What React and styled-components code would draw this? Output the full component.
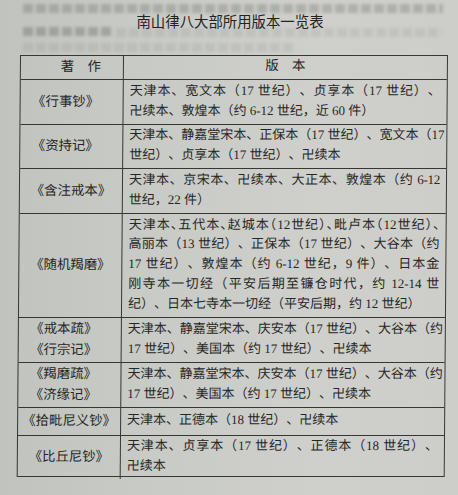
import React from "react";
import styled, { createGlobalStyle } from "styled-components";

const GlobalStyle = createGlobalStyle`
  html, body { margin: 0; padding: 0; background: #c9cbc6; }
  body {
    width: 458px;
    height: 495px;
    overflow: hidden;
    font-family: "Liberation Serif", "Noto Sans CJK SC", serif;
    color: #262626;
    text-spacing-trim: space-all;
  }
`;

const Page = styled.div`
  position: relative;
  width: 458px;
  height: 495px;
  overflow: hidden;
  box-sizing: border-box;
  padding-top: 12px;
  background-color: #cbccc7;
  background-image: linear-gradient(90deg, #c1c3be 0%, #c8cac5 30%, #cfd0cb 70%, #cdcec9 100%);
`;

/* faint bleed-through of the reverse page: blurred blocks, no text */
const Ghost = styled.div`
  position: absolute;
  left: ${(p) => p.$x}px;
  top: ${(p) => p.$y}px;
  width: ${(p) => p.$w}px;
  height: 9px;
  background: repeating-linear-gradient(
    to right,
    rgba(45, 50, 50, ${(p) => p.$a}) 0 10px,
    rgba(45, 50, 50, 0) 10px 13px
  );
  filter: blur(1.6px);
  pointer-events: none;
`;

const Sheet = styled.div`
  position: relative;
`;

const Title = styled.h1`
  margin: 0 0 23px;
  padding-left: 2px;
  font-family: "Liberation Serif", "Noto Sans CJK SC", serif;
  font-weight: 400;
  font-size: 14.4px;
  line-height: 20px;
  text-align: center;
  color: #232323;
`;

const Table = styled.div`
  margin-left: 20px;
  width: 428px;
  box-sizing: border-box;
  border: 1px solid #363636;
  transform: skewX(-0.45deg);
  transform-origin: top left;
`;

const Row = styled.div`
  display: grid;
  grid-template-columns: 103px 1fr;
  height: ${(p) => p.$h}px;
  box-sizing: border-box;
  border-top: ${(p) => (p.$first ? "none" : "1px solid #363636")};
`;

const Label = styled.div`
  display: flex;
  flex-direction: column;
  align-items: center;
  justify-content: center;
  box-sizing: border-box;
  border-right: 1px solid #363636;
  padding: 0 ${(p) => p.$pr || 0}px 2px 0;
  font-size: 13.4px;
  line-height: 21px;
  white-space: nowrap;
`;

const Content = styled.div`
  display: flex;
  flex-direction: column;
  justify-content: center;
  box-sizing: border-box;
  padding: 0 6px 3px 6px;
  font-size: 13px;
  line-height: 19.8px;
  min-width: 0;
`;

const HeadText = styled.div`
  text-align: center;
  font-size: 13.4px;
  line-height: 20px;
  white-space: pre;
  padding-left: ${(p) => p.$pl || 0}px;
`;

const Line = styled.div`
  white-space: nowrap;
  text-align: ${(p) => (p.$full ? "justify" : "left")};
  text-align-last: ${(p) => (p.$full ? "justify" : "left")};
  letter-spacing: ${(p) => (p.$tight ? "-0.25px" : "normal")};
  font-feature-settings: ${(p) => (p.$halt ? '"halt" 1' : "normal")};
`;

const rows = [
  {
    h: 45,
    labels: ["《行事钞》"],
    short: true,
    lines: [
      "天津本、宽文本（17 世纪）、贞享本（17 世纪）、",
      "卍续本、敦煌本（约 6-12 世纪，近 60 件）",
    ],
  },
  {
    h: 44,
    labels: ["《资持记》"],
    short: true,
    lines: [
      "天津本、静嘉堂宋本、正保本（17 世纪）、宽文本（17",
      "世纪）、贞享本（17 世纪）、卍续本",
    ],
  },
  {
    h: 45,
    labels: ["《含注戒本》"],
    lines: [
      { t: "天津本、京宋本、卍续本、大正本、敦煌本（约 6-12", tight: true },
      "世纪，22 件）",
    ],
  },
  {
    h: 104,
    labels: ["《随机羯磨》"],
    lines: [
      { t: "天津本、五代本、赵城本（12世纪）、毗卢本（12世纪）、", halt: true },
      "高丽本（13 世纪）、正保本（17 世纪）、大谷本（约",
      "17 世纪）、敦煌本（约 6-12 世纪，9 件）、日本金",
      "刚寺本一切经（平安后期至镰仓时代，约 12-14 世",
      "纪）、日本七寺本一切经（平安后期，约 12 世纪）",
    ],
  },
  {
    h: 45,
    labels: ["《戒本疏》", "《行宗记》"],
    short: true,
    lines: [
      "天津本、静嘉堂宋本、庆安本（17 世纪）、大谷本（约",
      "17 世纪）、美国本（约 17 世纪）、卍续本",
    ],
  },
  {
    h: 45,
    labels: ["《羯磨疏》", "《济缘记》"],
    short: true,
    lines: [
      "天津本、静嘉堂宋本、庆安本（17 世纪）、大谷本（约",
      "17 世纪）、美国本（约 17 世纪）、卍续本",
    ],
  },
  {
    h: 28,
    labels: ["《拾毗尼义钞》"],
    lines: ["天津本、正德本（18 世纪）、卍续本"],
  },
  {
    h: 41,
    labels: ["《比丘尼钞》"],
    lines: [
      "天津本、贞享本（17 世纪）、正德本（18 世纪）、",
      "卍续本",
    ],
  },
];

const ghosts = [
  { x: 23, y: 4, w: 420, a: 0.2 },
  { x: 23, y: 27, w: 90, a: 0.24 },
  { x: 116, y: 28, w: 326, a: 0.08 },
  { x: 23, y: 43, w: 270, a: 0.08 },
];

export default function App() {
  return (
    <>
      <GlobalStyle />
      <Page>
        {ghosts.map((g, i) => (
          <Ghost key={i} $x={g.x} $y={g.y} $w={g.w} $a={g.a} aria-hidden="true" />
        ))}
        <Sheet>
          <Title>南山律八大部所用版本一览表</Title>
          <Table>
            <Row $h={23} $first>
              <Label>
                <HeadText $pl={18}>{"著　作"}</HeadText>
              </Label>
              <Content>
                <HeadText>{"版　本"}</HeadText>
              </Content>
            </Row>
            {rows.map((r, i) => (
              <Row key={i} $h={r.h}>
                <Label $pr={r.short ? 12 : 0}>
                  {r.labels.map((l) => (
                    <div key={l}>{l}</div>
                  ))}
                </Label>
                <Content>
                  {r.lines.map((ln, j) => {
                    const o = typeof ln === "string" ? { t: ln } : ln;
                    const last = j === r.lines.length - 1;
                    return (
                      <Line key={j} $full={!last} $tight={o.tight} $halt={o.halt}>
                        {o.t}
                      </Line>
                    );
                  })}
                </Content>
              </Row>
            ))}
          </Table>
        </Sheet>
      </Page>
    </>
  );
}
